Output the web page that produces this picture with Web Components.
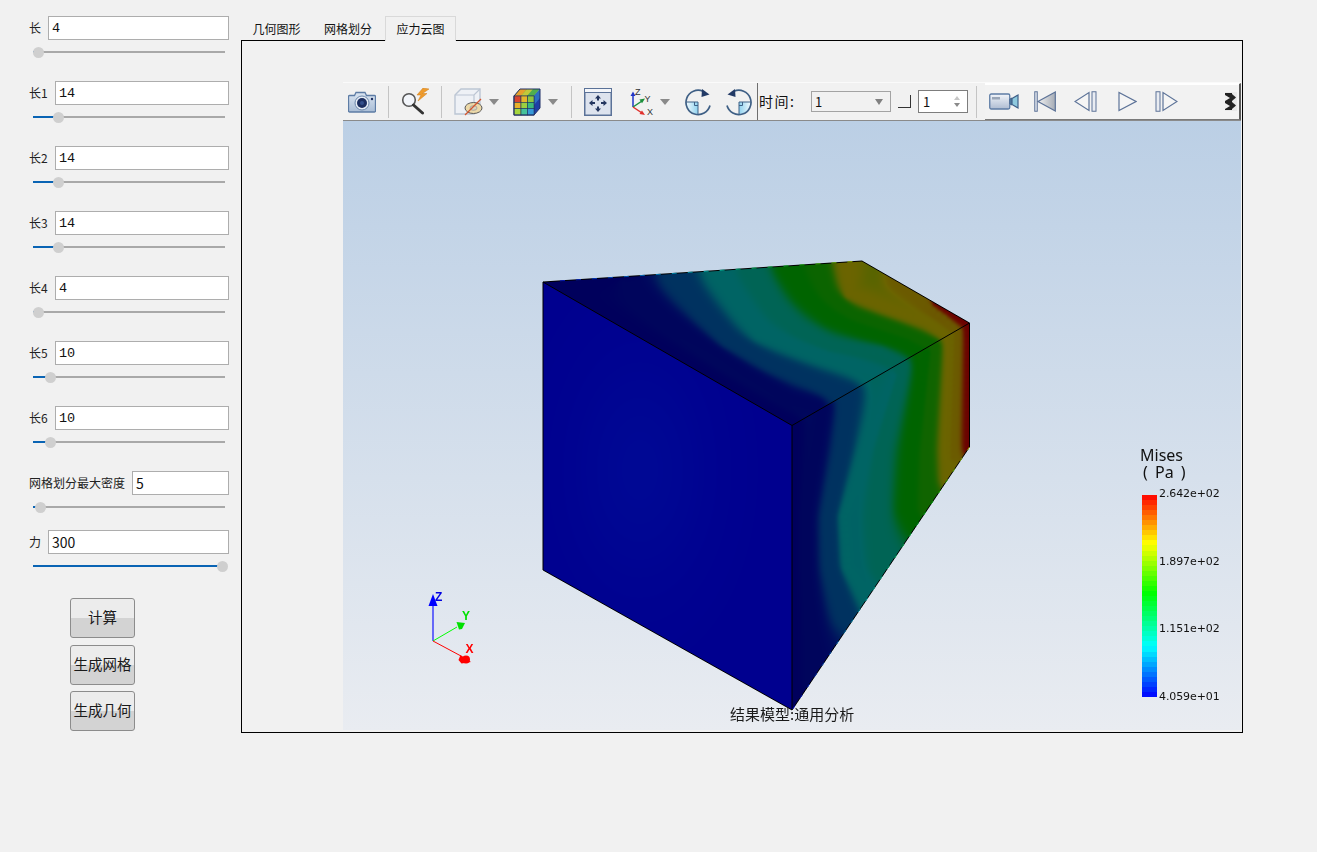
<!DOCTYPE html>
<html lang="zh">
<head>
<meta charset="utf-8">
<title>应力云图</title>
<style>
html,body{margin:0;padding:0;background:#f1f1f1;height:100%;overflow:hidden}
body{font-family:"Noto Sans CJK SC","Noto Sans",sans-serif;color:#1a1a1a}
</style>
</head>
<body>
<app-shell>
  <side-panel slot="side">
    <param-row label="长" value="4" pos="38" serif></param-row>
    <param-row label="长1" value="14" pos="58" serif lw="19"></param-row>
    <param-row label="长2" value="14" pos="58" serif lw="19"></param-row>
    <param-row label="长3" value="14" pos="58" serif lw="19"></param-row>
    <param-row label="长4" value="4" pos="38" serif lw="19"></param-row>
    <param-row label="长5" value="10" pos="50" serif lw="19"></param-row>
    <param-row label="长6" value="10" pos="50" serif lw="19"></param-row>
    <param-row label="网格划分最大密度" value="5" pos="40" lw="96" style="margin-bottom:17px"></param-row>
    <param-row label="力" value="300" pos="222"></param-row>
    <action-btn style="margin-top:3px">计算</action-btn>
    <action-btn style="margin-top:7px">生成网格</action-btn>
    <action-btn style="margin-top:6px">生成几何</action-btn>
  </side-panel>
  <tab-view slot="main">
    <result-view></result-view>
  </tab-view>
</app-shell>

<script>
const ICONS = {
camera:[28,22,`<defs><linearGradient id="c" x1="0" y1="0" x2="0" y2="1"><stop offset="0" stop-color="#dbe5f1"/><stop offset="1" stop-color="#a9bdd6"/></linearGradient></defs>
<path d="M1.5 4.5h5l1.5-3h9l1.5 3h8a1 1 0 0 1 1 1V20a1 1 0 0 1-1 1H1.5a1 1 0 0 1-1-1V5.500a1 1 0 0 1 1-1z" fill="url(#c)" stroke="#5d7ca5" stroke-width="1.300"/>
<circle cx="14" cy="12" r="7" fill="#e6edf6" stroke="#6d87aa"/><circle cx="14" cy="12" r="5" fill="#1d2f60"/><circle cx="14" cy="12" r="2" fill="#34508c"/><circle cx="24" cy="8" r="1.200" fill="#1d2f60"/>`],
mag:[30,27,`<circle cx="8" cy="12" r="6.300" fill="#f2f5fa" stroke="#565656" stroke-width="1.600"/><path d="M12.500 17l9 8" stroke="#333" stroke-width="3" stroke-linecap="round"/>
<path d="M22 0l-6 7h4l-3 6 9-7.500h-4.500L28 1z" fill="#ee9b2c" stroke="#d07f18" stroke-width=".5"/>`],
cube:[30,28,`<path d="M1 7L7 1h19v17l-6 8H1z" fill="#eef1f6" stroke="#bcc6d4" stroke-width="1.400"/><path d="M1 7h19l6-6M20 7v19" fill="none" stroke="#bcc6d4" stroke-width="1.200"/>
<ellipse cx="19.500" cy="20" rx="8.500" ry="5.500" fill="#ecd9a9" stroke="#5a5a5a"/><ellipse cx="19.500" cy="20" rx="3.500" ry="2.300" fill="#d8d3c0" stroke="#8a8a8a" stroke-width=".6"/><path d="M27 11L11 27" stroke="#d4552e" stroke-width="1.300"/>`],
rainbow:[28,28,`<path d="M7 1h20L21 8H1z" fill="#4fae4f"/><path d="M7 1h7l-6 7H1z" fill="#e8a02c"/><path d="M14 1h6l-6 7H8z" fill="#c3c93a"/><path d="M27 1v19l-6 7V8z" fill="#1e3fa5"/><path d="M27 1v9l-6 7V8z" fill="#2d6fc2"/>
<g stroke="#22325c" stroke-width=".6"><rect x="1" y="8" width="20" height="19" fill="#3bb0c8"/><rect x="1" y="8" width="7" height="6.300" fill="#d8442e"/><rect x="8" y="8" width="6.500" height="6.300" fill="#e6b62b"/><rect x="14.500" y="8" width="6.500" height="6.300" fill="#8ec63f"/><rect x="1" y="14.300" width="7" height="6.300" fill="#e8b02a"/><rect x="8" y="14.300" width="6.500" height="6.300" fill="#9bd040"/><rect x="14.500" y="14.300" width="6.500" height="6.300" fill="#3cba7a"/><rect x="1" y="20.600" width="7" height="6.400" fill="#a5d53e"/><rect x="8" y="20.600" width="6.500" height="6.400" fill="#45c19a"/><rect x="14.500" y="20.600" width="6.500" height="6.400" fill="#3698d8"/></g>
<path d="M7 1h20v19l-6 7H1V8z" fill="none" stroke="#1f2f66"/>`],
drop:[10,6,`<path d="M0 0h10L5 6z" fill="#8a8a8a"/>`],
fit:[28,28,`<rect x=".75" y=".75" width="26.500" height="26.500" fill="#dde3ee" stroke="#5b7298" stroke-width="1.500"/><rect x="1" y="1" width="26" height="3" fill="#f4f6fa"/><path d="M1 4.500h26" stroke="#5b7298"/>
<g fill="#23355e"><path d="M14 7l-3 3.500h2v2h2v-2h2z"/><path d="M14 24l-3-3.500h2v-2h2v2h2z"/><path d="M5 15l3.500-3v2h2.500v2H8.500v2z"/><path d="M23 15l-3.500-3v2H17v2h2.500v2z"/></g>`],
axes:[26,30,`<path d="M4 20V8" stroke="#2135c9" stroke-width="1.500"/><path d="M4 4.500L1.500 9h5z" fill="#2135c9"/><path d="M4 20l9-6" stroke="#1c8f3c" stroke-width="1.500"/><path d="M16 11.500l-5.500 1 2.500 3.700z" fill="#1c8f3c"/><path d="M4 20l9 6" stroke="#e0302c" stroke-width="1.500"/><path d="M16 28l-5.500-1 2.500-3.500z" fill="#e0302c"/>
<g font-family="Liberation Sans,sans-serif" font-size="9" fill="#333"><text x="6" y="7.500">Z</text><text x="15.500" y="14.500">Y</text><text x="18" y="28">X</text></g>`],
rotr:[28,28,`<defs><linearGradient id="ra" x1="0" y1="0" x2="1" y2="0"><stop offset="0" stop-color="#f4fbfe"/><stop offset="1" stop-color="#8ed1ee"/></linearGradient></defs>
<path d="M2 14h12v12A12 12 0 0 1 2 14z" fill="url(#ra)"/><path d="M2 14h12v12M10.500 14v3.500H14" fill="none" stroke="#3e6186"/>
<path d="M19 3.200A12.200 12.200 0 1 0 26 17.500" fill="none" stroke="#3e5f85" stroke-width="1.700"/><path d="M25.500 6.500L18 1l-.5 8z" fill="#223a66"/>`],
rotl:[28,28,`<defs><linearGradient id="rb" x1="0" y1="0" x2="1" y2="0"><stop offset="0" stop-color="#8ed1ee"/><stop offset="1" stop-color="#f4fbfe"/></linearGradient></defs>
<path d="M26 14H14v12A12 12 0 0 0 26 14z" fill="url(#rb)"/><path d="M26 14H14v12M17.500 14v3.500H14" fill="none" stroke="#3e6186"/>
<path d="M9 3.200A12.200 12.200 0 1 1 2 17.500" fill="none" stroke="#3e5f85" stroke-width="1.700"/><path d="M2.500 6.500L10 1l.5 8z" fill="#223a66"/>`],
video:[30,17,`<defs><linearGradient id="v" x1="0" y1="0" x2="0" y2="1"><stop offset="0" stop-color="#f2f5fa"/><stop offset="1" stop-color="#aebcd2"/></linearGradient></defs>
<rect x=".75" y="1" width="20" height="15" rx="1.500" fill="url(#v)" stroke="#5d7ca5" stroke-width="1.300"/><rect x="3" y="4" width="8" height="2.500" fill="#9aa6b8"/><path d="M21 6l2-1v7l-2-1z" fill="#5c8fb0" stroke="#3f5f88"/><path d="M23 5.500l6-3.500v13l-6-3.500z" fill="#8ec9de" stroke="#3f5f88" stroke-width="1.200"/>`],
first:[22,21,`<defs><linearGradient id="f" x1="0" y1="0" x2="1" y2="0"><stop offset="0" stop-color="#f2f2f2"/><stop offset="1" stop-color="#a6acb6"/></linearGradient></defs><rect x=".75" y=".75" width="2.500" height="19.500" fill="#dfe4ec" stroke="#5d7398"/><path d="M21.300 1v19L4 10.500z" fill="url(#f)" stroke="#5d7398" stroke-width="1.200"/>`],
prev:[23,21,`<path d="M15 1.500v18L1 10.500z" fill="#f5f5f5" stroke="#5d7398" stroke-width="1.200"/><rect x="18" y=".75" width="4" height="19.500" fill="#e9ecf2" stroke="#5d7398"/>`],
play:[19,21,`<path d="M1 1.500v18l17-9z" fill="#f5f5f5" stroke="#5d7398" stroke-width="1.200"/>`],
next:[23,21,`<rect x="1" y=".75" width="4" height="19.500" fill="#e9ecf2" stroke="#5d7398"/><path d="M8 1.500v18l14-9z" fill="#f5f5f5" stroke="#5d7398" stroke-width="1.200"/>`],
more:[12,19,`<defs><filter id="m" x="-20%" y="-20%" width="140%" height="140%"><feGaussianBlur stdDeviation=".6"/></filter></defs><rect width="12" height="19" fill="#e8e8e8"/><g filter="url(#m)"><rect x="0" y="1" width="7" height="17" fill="#222"/><path d="M0 3l5 3-5 3z" fill="#eee"/><path d="M0 11l5 3-5 3z" fill="#eee"/><path d="M7 2l4 3.500L7 9z" fill="#222"/><path d="M7 10l4 3.500L7 17z" fill="#222"/></g>`]
};
class XIcon extends HTMLElement{
  connectedCallback(){
    const [w,h,svg]=ICONS[this.getAttribute('name')];
    this.attachShadow({mode:'open'}).innerHTML=`<style>:host{display:block;flex:none;width:${w}px;height:${h}px}svg{display:block}</style><svg width="${w}" height="${h}" viewBox="0 0 ${w} ${h}" xmlns="http://www.w3.org/2000/svg">${svg}</svg>`;
  }
}
customElements.define('x-icon',XIcon);

class AppShell extends HTMLElement{
  constructor(){super();this.attachShadow({mode:'open'}).innerHTML=`<style>
  :host{display:flex;width:1317px;height:852px;background:#f1f1f1}
  ::slotted([slot=side]){flex:none;width:241px}
  ::slotted([slot=main]){flex:none;width:1002px}
  </style><slot name="side"></slot><slot name="main"></slot>`}
}
customElements.define('app-shell',AppShell);

class SidePanel extends HTMLElement{
  constructor(){super();this.attachShadow({mode:'open'}).innerHTML=`<style>
  :host{display:flex;flex-direction:column;box-sizing:border-box;padding:16px 12px 0 29px}
  </style><slot></slot>`}
}
customElements.define('side-panel',SidePanel);

class ParamRow extends HTMLElement{
  connectedCallback(){
    const label=this.getAttribute('label'),value=this.getAttribute('value'),pos=+this.getAttribute('pos'),lw=this.getAttribute('lw')||12;
    const serif=this.hasAttribute('serif');
    const fill=pos-33;
    this.attachShadow({mode:'open'}).innerHTML=`<style>
    :host{display:block;margin-bottom:23px}
    .top{display:flex;align-items:center;gap:7px;height:24px}
    .lab{flex:none;width:${lw}px;font-size:12px;white-space:nowrap;color:#222;line-height:24px;margin-top:-1px}
    .val{flex:1;box-sizing:border-box;height:24px;background:#fff;border:1px solid #adadad;padding-left:3px;color:#111;
      font:${serif?'13.5px "Liberation Mono"':'14px "Noto Sans CJK SC","Noto Sans"'},monospace;line-height:${serif?24:22}px}
    .slider{position:relative;margin:6px 4px 0 4px;height:12px}
    .track{position:absolute;left:0;right:0;top:5px;height:2px;background:#a9a9a9}
    .fill{position:absolute;left:0;top:5px;height:2px;width:${fill}px;background:#0a64b4}
    .thumb{position:absolute;top:.5px;left:${fill-5.5}px;width:11px;height:11px;border-radius:50%;background:#cfcfcf}
    </style>
    <div class="top"><span class="lab">${label}</span><div class="val">${value}</div></div>
    <div class="slider"><div class="track"></div><div class="fill"></div><div class="thumb"></div></div>`;
  }
}
customElements.define('param-row',ParamRow);

class ActionBtn extends HTMLElement{
  constructor(){super();this.attachShadow({mode:'open'}).innerHTML=`<style>
  :host{display:flex;align-items:center;justify-content:center;box-sizing:border-box;width:65px;height:40px;margin-left:41px;padding-bottom:3px;
   border:1px solid #8c8c8c;border-radius:3px;background:linear-gradient(#ececec 0 50%,#d3d3d3 50% 100%);
   font-size:14.5px;color:#1a1a1a;white-space:nowrap}
  </style><slot></slot>`}
}
customElements.define('action-btn',ActionBtn);

class TabView extends HTMLElement{
  constructor(){super();this.attachShadow({mode:'open'}).innerHTML=`<style>
  :host{display:block;padding-top:16px}
  .tabs{display:flex;height:24px;position:relative;z-index:1;font-size:12px;color:#111}
  .t{width:72px;text-align:center;line-height:26px;box-sizing:border-box}
  .t:first-child{width:71px;padding-left:0}
  .t.on{width:71px;margin-left:1px;height:25px;background:#f1f1f1;border:1px solid #d9d9d9;border-bottom:none;line-height:24px}
  .frame{box-sizing:border-box;height:693px;border:1px solid #000;padding:41px 1px 2px 101px}
  </style><div class="tabs"><div class="t">几何图形</div><div class="t">网格划分</div><div class="t on">应力云图</div></div>
  <div class="frame"><slot></slot></div>`}
}
customElements.define('tab-view',TabView);

class ResultView extends HTMLElement{
  constructor(){super();this.attachShadow({mode:'open'}).innerHTML=`<style>
  :host{display:flex;flex-direction:column;width:898px;height:648px}
  fea-scene{flex:1}
  </style><tool-bar></tool-bar><fea-scene></fea-scene>`}
}
customElements.define('result-view',ResultView);

class ToolBar extends HTMLElement{
  constructor(){
    super();
    const ic=(n,m)=>`<x-icon name="${n}" style="margin-left:${m}px"></x-icon>`;
    const dr=(m)=>`<x-icon name="drop" style="margin-left:${m}px"></x-icon>`;
    const sep=(m)=>`<i class="sep" style="margin-left:${m}px"></i>`;
    this.attachShadow({mode:'open'}).innerHTML=`<style>
    :host{display:flex;flex:none;align-items:center;box-sizing:border-box;height:39px;background:#f1f1f1;border-top:1px solid #fafafa;border-bottom:1px solid #8a8a8a;font-size:14px;color:#111}
    .sep{flex:none;width:1px;height:32px;background:#c4c4c4}
    .line{flex:none;width:1px;align-self:stretch;background:#6e6e6e;margin-left:4px}
    .lbl{flex:none;width:38px;margin:-2px 0 0 1px;white-space:nowrap;letter-spacing:1.5px}
    .combo{flex:none;box-sizing:border-box;width:80px;height:21px;margin-left:14px;border:1px solid #a3a3a3;display:flex;align-items:center;justify-content:space-between;padding:0 7px 0 3px;font-size:13px}
    .corner{flex:none;width:13px;height:13px;margin-left:7px;box-sizing:border-box;border-right:1.5px solid #333;border-bottom:1.5px solid #333}
    .spin{flex:none;box-sizing:border-box;width:50px;height:23px;margin-left:7px;background:#fff;border:1px solid #7d7d7d;display:flex;align-items:center;justify-content:space-between;padding:0 7px 0 4px;font-size:13px}
    .ar{display:flex;flex-direction:column;gap:3px}
    .ar b{display:block;width:0;height:0;border-left:3px solid transparent;border-right:3px solid transparent}
    .ar b:first-child{border-bottom:4px solid #c6c6c6}.ar b:last-child{border-top:4px solid #8a8a8a}
    .tri{width:0;height:0;border-left:4.5px solid transparent;border-right:4.5px solid transparent;border-top:6px solid #808080}
    .play{flex:1;align-self:stretch;margin-left:8px;display:flex;align-items:center;background:#f2f2f2;border-top:1px solid #fff;border-bottom:1px solid #7a7a7a;border-right:2px solid #5a5a5a;box-shadow:inset 0 1px #fff;padding-left:4px}
    </style>
    ${ic('camera',5)}${sep(12)}${ic('mag',12)}${sep(10)}${ic('cube',12)}${dr(5)}${ic('rainbow',14)}${dr(7)}${sep(13)}${ic('fit',12)}${ic('axes',17)}${dr(5)}${ic('rotr',14)}${ic('rotl',13)}
    <i class="line"></i><span class="lbl">时间:</span>
    <div class="combo"><span>1</span><span class="tri"></span></div><i class="corner"></i>
    <div class="spin"><span>1</span><span class="ar"><b></b><b></b></span></div>
    ${sep(8)}
    <div class="play">${ic('video',0)}${ic('first',15)}${ic('prev',18)}${ic('play',21)}${ic('next',18)}${ic('more',47)}</div>`;
  }
}
customElements.define('tool-bar',ToolBar);

class FeaScene extends HTMLElement{
  constructor(){
    super();
    this.attachShadow({mode:'open'}).innerHTML=`<style>
    :host{display:block;position:relative;background:linear-gradient(#bbcfe5,#e9ecf1);overflow:hidden}
    canvas{position:absolute;left:0;top:0}
    .cap{position:absolute;left:387px;top:583px;font-size:15px;line-height:20px;white-space:nowrap;color:#1a1a1a}
    svg{position:absolute;left:60px;top:460px}
    color-legend{position:absolute;left:797px;top:326px}
    </style>
    <canvas width="898" height="609"></canvas>
    <svg width="90" height="90" viewBox="0 0 90 90" xmlns="http://www.w3.org/2000/svg">
      <path d="M30 60V22" stroke="#0000ff" stroke-width="1.100"/><path d="M30 13l-4.500 12h9z" fill="#0000ff"/>
      <path d="M30 60L54 46" stroke="#00ff00"/><path d="M62 42l-8.500-1 2.500 7.500 3-.5z" fill="#00e000"/>
      <path d="M30 60L58 75" stroke="#ff0000"/><path d="M68 81l-10.500-7-2 5 3 3.500z" fill="#ff0000"/><circle cx="63" cy="78.500" r="4" fill="#ff0000"/>
      <g font-family="Liberation Sans,sans-serif" font-size="12" font-weight="700"><text x="32" y="19.500" fill="#0000e0">Z</text><text x="59" y="39" fill="#00e000">Y</text><text x="62.500" y="72" fill="#ff0000">X</text></g>
    </svg>
    <color-legend></color-legend>
    <div class="cap">结果模型:通用分析</div>`;
    this.paint(this.shadowRoot.querySelector('canvas').getContext('2d'));
  }
  paint(ctx){
    const OX=343,OY=121;
    const sample=lines=>{const out=[];for(const[v,l]of lines){for(let i=0;i<l.length-1;i++){const[a,b]=l[i],[c,d]=l[i+1];const n=Math.max(1,Math.round(Math.hypot(c-a,d-b)/18));for(let k=0;k<n;k++){const t=k/n;out.push([530+(a+(c-a)*t)/3,250+(b+(d-b)*t)/3,v])}}const[e,f]=l[l.length-1];out.push([530+e/3,250+f/3,v])}return out};
    const topIso=sample([
      [0,[[40,98],[785,525]]],
      [0,[[40,98],[280,80]]],
      [.05,[[280,95],[400,200],[500,270],[650,370],[780,445],[860,470]]],
      [.5,[[430,80],[510,180],[590,270],[720,340],[880,400],[960,430]]],
      [1,[[560,65],[630,170],[690,250],[830,300],[970,340],[1085,385]]],
      [1.15,[[660,60],[730,170],[800,240],[900,290],[1050,310],[1115,345]]],
      [2,[[770,50],[820,130],[900,200],[1000,240],[1130,280],[1190,320]]],
      [2.1,[[860,40],[890,130],[970,195],[1100,240],[1215,285]]],
      [3,[[950,30],[960,130],[1060,170],[1190,215],[1265,265]]],
      [3.1,[[1100,90],[1180,160],[1240,205],[1280,245]]],
      [4,[[1220,160],[1290,205],[1320,222]]]
    ]);
    const rightIso=sample([
      [0,[[788,525],[788,1385]]],
      [.05,[[880,470],[860,600],[830,800],[830,950],[840,1100],[840,1300]]],
      [.5,[[960,430],[940,600],[900,800],[905,950],[950,1100]]],
      [1,[[1090,380],[1010,600],[945,800],[955,950],[1030,1070]]],
      [1.15,[[1115,350],[1050,600],[1040,800],[1050,950],[1095,1000]]],
      [2,[[1190,310],[1150,600],[1135,780],[1170,830]]],
      [2.15,[[1215,290],[1190,600],[1190,790]]],
      [3,[[1265,260],[1255,600],[1255,690]]],
      [3.1,[[1280,245],[1268,620]]],
      [4,[[1318,222],[1318,595]]]
    ]);
    const top=[[543,282],[862,261],[969.5,323],[792,425.5]];
    const right=[[792,425.5],[969.5,323],[969.5,447],[792,710]];
    const front=[[543,282],[792,425.5],[792,710],[543,570]];
    const cm=[[0,0,92],[0,100,100],[0,100,0],[107,100,0],[107,0,0]];
    const col=v=>{v=Math.max(0,Math.min(3.999,v));const i=Math.floor(v),t=v-i;return cm[i].map((c,k)=>c+(cm[i+1][k]-c)*t)};
    const inside=(p,x,y)=>{let s=0;for(let i=0;i<p.length;i++){const[a,b]=p[i],[c,d]=p[(i+1)%p.length];const k=(c-a)*(y-b)-(d-b)*(x-a);if(k!==0){if(s&&Math.sign(k)!==s)return false;s=Math.sign(k)}}return true};
    const idw=(pts,x,y)=>{let n=0,d=0;for(const[a,b,v]of pts){const r=(x-a)*(x-a)+(y-b)*(y-b)+9;const w=1/(r*r);n+=w*v;d+=w}return n/d};
    const img=ctx.createImageData(898,609),D=img.data;
    for(let py=250;py<720;py++)for(let px=540;px<975;px++){
      let c=null;const x=px+.5,y=py+.5;
      if(inside(front,x,y)){const g=Math.exp(-(((x-640)**2)/5000+((y-470)**2)/14000));c=[0,8*g,143+5*g]}
      else if(inside(top,x,y))c=col(idw(topIso,x,y));
      else if(inside(right,x,y))c=col(idw(rightIso,x,y));
      if(c){const o=((py-OY)*898+(px-OX))*4;D[o]=c[0];D[o+1]=c[1];D[o+2]=c[2];D[o+3]=255}
    }
    ctx.putImageData(img,0,0);
    ctx.translate(-OX,-OY);
    ctx.strokeStyle='#000';ctx.lineWidth=1;
    const pl=a=>{ctx.beginPath();a.forEach(([x,y],i)=>i?ctx.lineTo(x,y):ctx.moveTo(x,y));ctx.stroke()};
    pl([[543,570],[543,282],[862,261],[969.5,323],[969.5,447],[792,710],[543,570]]);
    pl([[543,282],[792,425.5],[969.5,323]]);pl([[792,425.5],[792,710]]);
    const g=ctx.createLinearGradient(543,0,862,0);
    [[0,'#0000c0'],[.3,'#0060b0'],[.55,'#00b0a0'],[.8,'#00b000'],[1,'#b0b000']].forEach(s=>g.addColorStop(s[0],s[1]));
    ctx.strokeStyle=g;ctx.setLineDash([5,11]);pl([[560,280.9],[862,261]]);
    const g2=ctx.createLinearGradient(0,447,0,710);
    [[0,'#a0a000'],[.2,'#00a000'],[.55,'#00a090'],[1,'#0000c0']].forEach(s=>g2.addColorStop(s[0],s[1]));
    ctx.strokeStyle=g2;ctx.setLineDash([4,9]);pl([[969.5,447],[792,710]]);ctx.setLineDash([]);
  }
}

class ColorLegend extends HTMLElement{
  constructor(){
    super();
    const n=40,stops=[];
    const cm=[[255,0,0],[255,255,0],[0,255,0],[0,255,255],[0,0,255]],at=[0,.24,.485,.75,1];
    for(let i=0;i<n;i++){
      const t=(i+.5)/n;let k=0;while(k<3&&t>at[k+1])k++;
      const f=(t-at[k])/(at[k+1]-at[k]);const c=cm[k].map((v,j)=>Math.round(v+(cm[k+1][j]-v)*f));
      stops.push(`rgb(${c}) ${i/n*100}% ${(i+1)/n*100}%`);
    }
    this.attachShadow({mode:'open'}).innerHTML=`<style>
    :host{display:block;width:90px;color:#111}
    .t{font:16px/17px "Noto Sans",sans-serif;white-space:nowrap}
    .u{margin-left:3px;word-spacing:3px}
    .row{display:flex;margin-top:6px;height:216px;margin-left:2px}
    .bar{width:15px;height:202px;margin-top:8px;background:linear-gradient(${stops.join(',')})}
    .lab{margin-left:2px;display:flex;flex-direction:column;justify-content:space-between;font:11px/13px "DejaVu Sans",sans-serif;letter-spacing:-.1px}
    </style><div class="t">Mises</div><div class="t u">( Pa )</div>
    <div class="row"><div class="bar"></div><div class="lab"><span>2.642e+02</span><span>1.897e+02</span><span>1.151e+02</span><span>4.059e+01</span></div></div>`;
  }
}
customElements.define('color-legend',ColorLegend);
customElements.define('fea-scene',FeaScene);
</script>
</body>
</html>
